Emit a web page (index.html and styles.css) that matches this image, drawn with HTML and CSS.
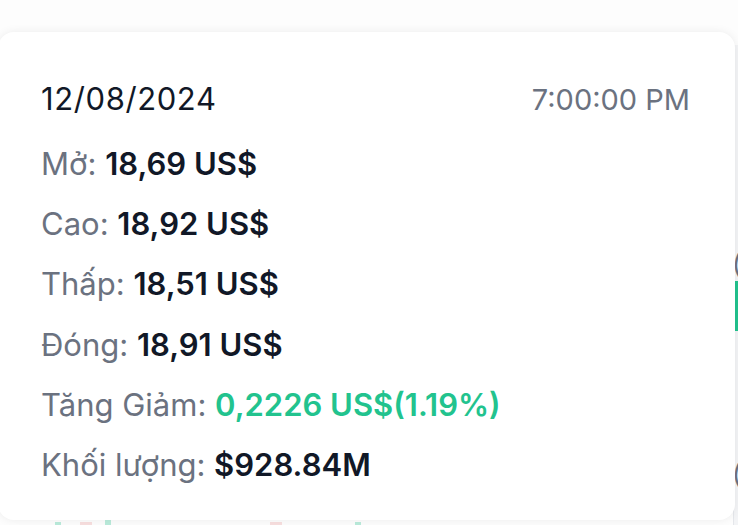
FILE: index.html
```html
<!DOCTYPE html>
<html lang="vi">
<head>
    <meta charset="UTF-8">
    <meta name="viewport" content="width=device-width, initial-scale=1.0">
    <title>Biểu đồ giá</title>
    <link rel="stylesheet" href="styles.css">
</head>
<body>

<div class="chart">
    <!-- phần biểu đồ phía sau tooltip -->
    <div class="axis-line"></div>
    <span class="axis-label" style="top: 248px;">(</span>
    <span class="axis-label" style="top: 458px;">(</span>
    <div class="candle up" style="left: 734px; top: 281px; height: 50px;"></div>
    <div class="candle up faint" style="left: 105px; top: 520px; height: 10px;"></div>
    <div class="candle down faint" style="left: 80px; top: 522px; height: 10px;"></div>
    <div class="candle up faint" style="left: 55px; top: 522px; height: 10px;"></div>
    <div class="candle down faint" style="left: 270px; top: 522px; height: 10px;"></div>
    <div class="candle up faint" style="left: 355px; top: 522px; height: 10px;"></div>

    <!-- tooltip -->
    <div class="tooltip">
        <div class="tooltip-head">
            <span class="date">12/08/2024</span>
            <span class="time">7:00:00 PM</span>
        </div>
        <p class="row"><span class="label">Mở:</span> <strong>18,69 US$</strong></p>
        <p class="row"><span class="label">Cao:</span> <strong>18,92 US$</strong></p>
        <p class="row"><span class="label">Thấp:</span> <strong>18,51 US$</strong></p>
        <p class="row"><span class="label">Đóng:</span> <strong>18,91 US$</strong></p>
        <p class="row"><span class="label">Tăng Giảm:</span> <strong class="green">0,2226 US$(1.19%)</strong></p>
        <p class="row"><span class="label">Khối lượng:</span> <strong>$928.84M</strong></p>
    </div>
</div>

</body>
</html>
```

FILE: styles.css
```css
body {
    margin: 0;
    font-family: Inter, 'Noto Sans', sans-serif;
    background-color: #fdfdfd;
    color: #111827;
}
.chart {
    position: relative;
    width: 738px;
    height: 525px;
    overflow: hidden;
}
.axis-line {
    position: absolute;
    left: 733px;
    top: 45px;
    bottom: 0;
    width: 5px;
    background-color: #f3f4f6;
    border-left: 1px solid #e5e7eb;
}
.axis-label {
    position: absolute;
    left: 732px;
    font-size: 26px;
    color: #6b7280;
}
.candle {
    position: absolute;
    width: 12px;
}
.candle.up {
    background-color: #22c38e;
    width: 6px;
}
.candle.down {
    background-color: #ef9a9a;
}
.candle.faint {
    opacity: 0.3;
}

/* tooltip */
.tooltip {
    position: absolute;
    left: -2px;
    top: 32px;
    width: 737px;
    height: 488px;
    box-sizing: border-box;
    padding: 49px 45px 0 43px;
    background-color: #fff;
    border-radius: 16px;
    box-shadow: 0 0 10px rgba(0, 0, 0, 0.07);
}
.tooltip-head {
    display: flex;
    justify-content: space-between;
    align-items: baseline;
    line-height: 36px;
    margin-bottom: 28px;
}
.date {
    font-size: 31px;
    letter-spacing: 0.6px;
    color: #111827;
}
.time {
    font-size: 29px;
    color: #6b7280;
}
.row {
    margin: 0 0 24.2px;
    font-size: 31px;
    line-height: 36px;
}
.label {
    color: #6b7280;
}
.row strong {
    font-weight: 600;
    color: #111827;
}
.row strong.green {
    color: #22c38e;
}
```
